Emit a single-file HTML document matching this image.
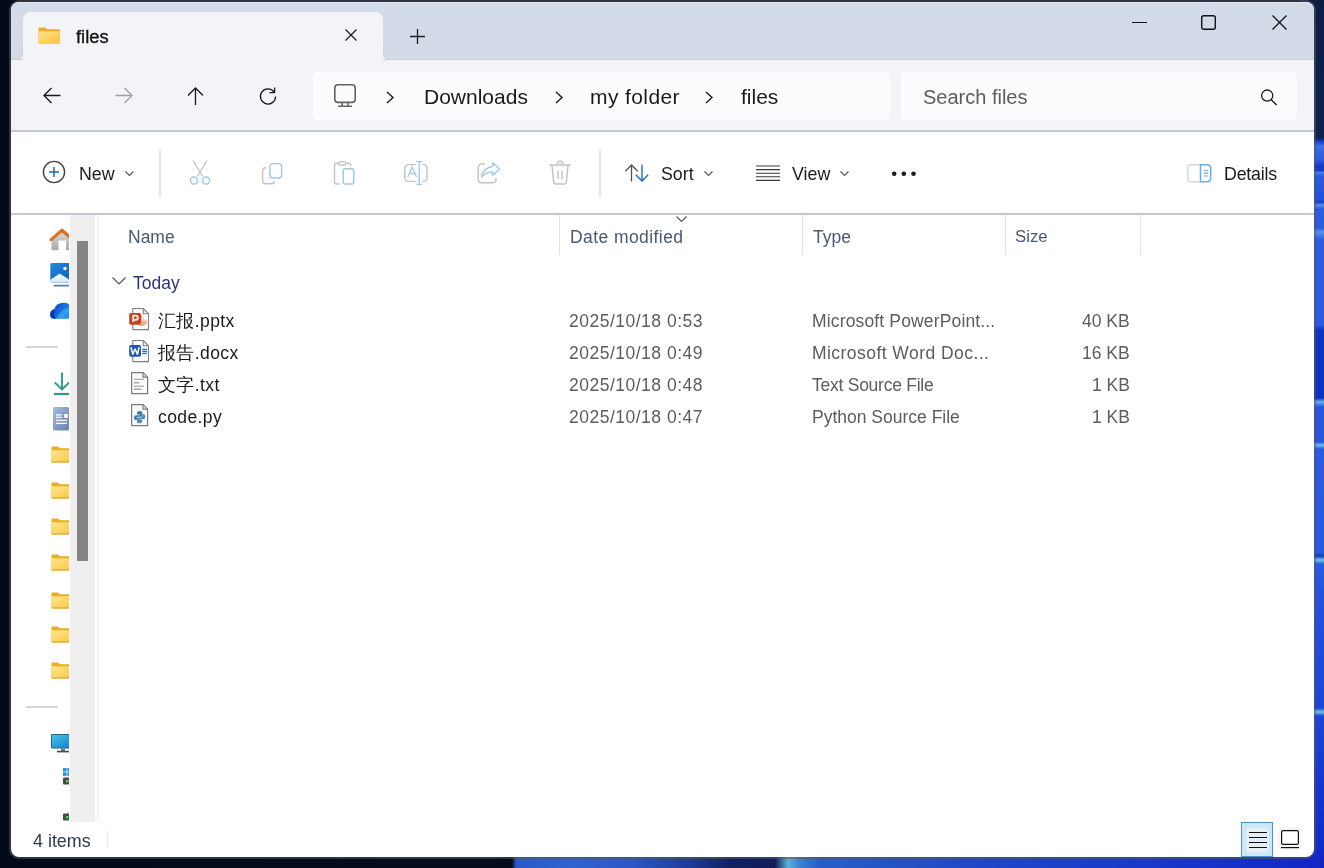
<!DOCTYPE html>
<html><head><meta charset="utf-8">
<style>
*{margin:0;padding:0;box-sizing:border-box}
html,body{width:1324px;height:868px;overflow:hidden;background:#040a17;font-family:"Liberation Sans",sans-serif;color:#1a1a1a}
.a{position:absolute}
.t{position:absolute;white-space:nowrap;line-height:1;will-change:transform}
svg{position:absolute;overflow:visible}
#bg{left:0;top:0;width:1324px;height:868px}
#win{left:9px;top:0px;width:1307px;height:859px;border-radius:10px;background:#fff;border:2px solid rgba(80,88,97,.56);box-shadow:inset 0 0 0 1px rgba(255,255,255,.55);background-clip:padding-box}
</style></head><body>
<div id="bg" class="a">
  <div class="a" style="left:1300px;top:0;width:24px;height:868px;background:linear-gradient(180deg,#0d1e46 0,#0f2150 138px,#1838c0 141px,#3a70e8 146px,#2a5ce0 160px,#1838c8 166px,#1838c8 171px,#4a80e8 172px,#2a5ce0 176px,#2252dc 200px,#1838c8 202px,#5a90e8 205px,#2a5ce0 209px,#2a5ce0 228px,#5a90ec 232px,#2a5ce0 240px,#2a5ce0 325px,#1030c0 330px,#1030c0 398px,#6ab0e8 402px,#2855dc 407px,#2855dc 442px,#70c0e8 445px,#2a5ae0 449px,#2a58e0 553px,#1535c0 556px,#70c8e8 560px,#2a5ae0 564px,#2550dc 600px,#1e44d4 708px,#70c0e8 712px,#1e44d4 716px,#1632cc 800px,#1029c6 868px)"></div>
  <div class="a" style="left:0;top:850px;width:1324px;height:18px;background:linear-gradient(90deg,#040a17 0,#060c1a 512px,#2a58c8 516px,#3162cf 570px,#2c58c6 630px,#1f3a98 690px,#112160 730px,#0f1d58 775px,#5cb0d8 788px,#3c80cc 800px,#2a5cc8 820px,#2452c4 900px,#1f44c8 1000px,#1a38ca 1150px,#1226c5 1324px)"></div>
</div>
<div id="win" class="a">
  <!-- inner coordinates: subtract 11,2 ... we use page coords via wrapper -->
</div>
<div class="a" style="left:0;top:0;width:1324px;height:868px">
  <!-- titlebar -->
  <div class="a" style="left:11px;top:2px;width:1303px;height:58px;background:#d4dbe8;border-radius:8px 8px 0 0;border-bottom:1px solid #c9d0dc;border-top:1px solid #e1e6f0"></div>
  <!-- nav bar -->
  <div class="a" style="left:11px;top:60px;width:1303px;height:70px;background:#f3f4f8"></div>
  <div class="a" style="left:11px;top:130px;width:1303px;height:2px;background:#c3c8d1"></div>
  <!-- tab -->
  <div class="a" style="left:23px;top:12px;width:360px;height:48px;background:#f3f4f8;border-radius:8px 8px 0 0"></div>
  <div class="a" style="left:11px;top:50px;width:12px;height:9px;background:#f3f4f8"></div>
  <div class="a" style="left:11px;top:46px;width:12px;height:14px;background:#d4dbe8;border-radius:0 0 7px 0;border-bottom:1px solid #c9d0dc;border-right:1px solid #c9d0dc"></div>
  <div class="a" style="left:383px;top:50px;width:12px;height:9px;background:#f3f4f8"></div>
  <div class="a" style="left:383px;top:46px;width:12px;height:14px;background:#d4dbe8;border-radius:0 0 0 7px;border-bottom:1px solid #c9d0dc;border-left:1px solid #c9d0dc"></div>
  <!-- tab folder icon -->
  <svg style="left:37.5px;top:27px" width="22.5" height="17" viewBox="0 0 22 18" preserveAspectRatio="none">
    <defs><linearGradient id="fg" x1="0" y1="0" x2="1" y2="1"><stop offset="0" stop-color="#ffe38a"/><stop offset="1" stop-color="#fcc43c"/></linearGradient></defs>
    <path d="M0.5 1.5 Q0.5 0.5 1.5 0.5 H7 L9 2.5 H20.5 Q21.5 2.5 21.5 3.5 V16.5 Q21.5 17.5 20.5 17.5 H1.5 Q0.5 17.5 0.5 16.5 Z" fill="#e8ad22"/>
    <path d="M0.5 4.5 H21.5 V16.5 Q21.5 17.5 20.5 17.5 H1.5 Q0.5 17.5 0.5 16.5 Z" fill="url(#fg)"/>
  </svg>
  <div class="t" style="left:76.3px;top:28.2px;font-size:18.4px;color:#111;-webkit-text-stroke:0.3px #111">files</div>
  <svg style="left:345px;top:29px" width="12" height="12"><path d="M0.5 0.5 L11.5 11.5 M11.5 0.5 L0.5 11.5" stroke="#1f1f1f" stroke-width="1.3"/></svg>
  <svg style="left:410px;top:29px" width="15" height="15"><path d="M7.5 0 V15 M0 7.5 H15" stroke="#1f1f1f" stroke-width="1.3"/></svg>
  <!-- caption buttons -->
  <div class="a" style="left:1132px;top:22px;width:15px;height:1px;background:#111"></div>
  <svg style="left:1201px;top:15px" width="15" height="15"><rect x="0.7" y="0.7" width="13.6" height="13.6" rx="2" fill="none" stroke="#111" stroke-width="1.4"/></svg>
  <svg style="left:1272px;top:15px" width="15" height="15"><path d="M0.5 0.5 L14.5 14.5 M14.5 0.5 L0.5 14.5" stroke="#111" stroke-width="1.3"/></svg>

  <!-- nav arrows -->
  <svg style="left:43px;top:87px" width="18" height="17" viewBox="0 0 18 17"><path d="M17.5 8.5 H1 M8.5 1 L1 8.5 L8.5 16" fill="none" stroke="#1a1a1a" stroke-width="1.3"/></svg>
  <svg style="left:115px;top:87px" width="18" height="17" viewBox="0 0 18 17"><path d="M0.5 8.5 H17 M9.5 1 L17 8.5 L9.5 16" fill="none" stroke="#a0a0a0" stroke-width="1.3"/></svg>
  <svg style="left:187px;top:87px" width="17" height="18" viewBox="0 0 17 18"><path d="M8.5 18 V1 M1 8.5 L8.5 1 L16 8.5" fill="none" stroke="#1a1a1a" stroke-width="1.3"/></svg>
  <svg style="left:259px;top:87px" width="18" height="18" viewBox="0 0 18 18"><path d="M15.2 5 A7.6 7.6 0 1 0 16.6 9.5" fill="none" stroke="#1a1a1a" stroke-width="1.3"/><path d="M15.6 0.5 V5.6 H10.5" fill="none" stroke="#1a1a1a" stroke-width="1.3"/></svg>

  <!-- address bar -->
  <div class="a" style="left:313px;top:72px;width:577px;height:48px;background:#fbfcfe;border-radius:6px"></div>
  <svg style="left:334px;top:83.8px" width="23" height="24" viewBox="0 0 23 24"><rect x="0.8" y="0.8" width="20.4" height="17.6" rx="3.2" fill="none" stroke="#626262" stroke-width="1.6"/><path d="M8.2 18.4 V21.6 M14 18.4 V21.6 M4 22.2 H18" fill="none" stroke="#626262" stroke-width="1.5"/></svg>
  <svg style="left:386px;top:90.5px" width="8" height="13"><path d="M1 1 L7 6.5 L1 12" fill="none" stroke="#1a1a1a" stroke-width="1.4"/></svg>
  <div class="t" style="left:424px;top:86px;font-size:21px">Downloads</div>
  <svg style="left:555px;top:91px" width="8" height="13"><path d="M1 1 L7 6.5 L1 12" fill="none" stroke="#1a1a1a" stroke-width="1.4"/></svg>
  <div class="t" style="left:590px;top:86px;font-size:21px;letter-spacing:0.4px">my folder</div>
  <svg style="left:705px;top:91px" width="8" height="13"><path d="M1 1 L7 6.5 L1 12" fill="none" stroke="#1a1a1a" stroke-width="1.4"/></svg>
  <div class="t" style="left:741px;top:86px;font-size:21px">files</div>
  <!-- search -->
  <div class="a" style="left:901px;top:72px;width:396px;height:48px;background:#fbfcfe;border-radius:6px"></div>
  <div class="t" style="left:923px;top:87px;font-size:20px;color:#5d5d5d">Search files</div>
  <svg style="left:1261px;top:88.5px" width="17" height="17" viewBox="0 0 17 17"><circle cx="6.2" cy="6.6" r="5.6" fill="none" stroke="#1a1a1a" stroke-width="1.3"/><path d="M10.3 10.7 L15.6 16" stroke="#1a1a1a" stroke-width="1.4"/></svg>

  <!-- command bar -->
  <div class="a" style="left:11px;top:132px;width:1303px;height:81px;background:#fff"></div>
  <div class="a" style="left:11px;top:213px;width:1303px;height:2px;background:#c3c8d1"></div>
  <!-- New -->
  <svg style="left:42.4px;top:160.4px" width="24" height="24" viewBox="0 0 24 24"><circle cx="12" cy="12" r="10.6" fill="none" stroke="#444" stroke-width="1.4"/><path d="M12 7 V17 M7 12 H17" stroke="#1d6bb8" stroke-width="1.5"/></svg>
  <div class="t" style="left:79px;top:165.7px;font-size:17.8px">New</div>
  <svg style="left:125px;top:171px" width="9" height="5"><path d="M0.5 0.5 L4.5 4.5 L8.5 0.5" fill="none" stroke="#555" stroke-width="1.1"/></svg>
  <div class="a" style="left:159px;top:149px;width:2px;height:48px;background:#e6e6e6"></div>
  <!-- cut -->
  <svg style="left:189px;top:160px" width="22" height="25" viewBox="0 0 22 25"><path d="M4 0.5 L13.5 16.5 M18 0.5 L8.5 16.5" fill="none" stroke="#c2c2c2" stroke-width="1.3"/><circle cx="5" cy="20.5" r="3.6" fill="none" stroke="#9cc7ea" stroke-width="1.4"/><circle cx="17" cy="20.5" r="3.6" fill="none" stroke="#9cc7ea" stroke-width="1.4"/></svg>
  <!-- copy -->
  <svg style="left:261px;top:162px" width="23" height="23" viewBox="0 0 23 23"><path d="M5.2 5.8 Q1.6 5.8 1.6 9.4 V18.2 Q1.6 21.8 5.2 21.8 H10.2 Q13.4 21.8 13.4 19.3" fill="none" stroke="#c2c2c2" stroke-width="1.4"/><rect x="8.9" y="1.6" width="11.7" height="14.4" rx="3" fill="none" stroke="#9cc7ea" stroke-width="1.4"/></svg>
  <!-- paste -->
  <svg style="left:333px;top:161px" width="22" height="24" viewBox="0 0 22 24"><path d="M5.3 2.3 H3.5 Q1.5 2.3 1.5 4.3 V21 Q1.5 23 3.5 23 H6.5" fill="none" stroke="#c2c2c2" stroke-width="1.4"/><path d="M13.5 2.3 H15.5 Q17.5 2.3 17.5 4.3 V5.3" fill="none" stroke="#c2c2c2" stroke-width="1.4"/><rect x="5.6" y="0.6" width="7.4" height="3.4" rx="1.7" fill="none" stroke="#c2c2c2" stroke-width="1.3"/><rect x="10.2" y="7.7" width="10.6" height="15.3" rx="2.2" fill="none" stroke="#9cc7ea" stroke-width="1.4"/></svg>
  <!-- rename -->
  <svg style="left:404px;top:161px" width="24" height="24" viewBox="0 0 24 24"><path d="M11.5 3.6 H5 Q0.8 3.6 0.8 7.8 V16.2 Q0.8 20.4 5 20.4 H11.5" fill="none" stroke="#c2c2c2" stroke-width="1.4"/><path d="M18.5 3.6 H19 Q23 3.6 23 7.8 V16.2 Q23 20.4 19 20.4 H18.5" fill="none" stroke="#c2c2c2" stroke-width="1.4"/><path d="M15.2 0.6 V23.4 M12.3 0.6 H18.2 M12.3 23.4 H18.2" fill="none" stroke="#9cc7ea" stroke-width="1.3"/><path d="M3.8 16 L8.2 6 L12.6 16 M5.4 12.6 H11" fill="none" stroke="#9cc7ea" stroke-width="1.2"/></svg>
  <!-- share -->
  <svg style="left:477px;top:162px" width="24" height="22" viewBox="0 0 24 22"><path d="M8 2 H5 Q1.2 2 1.2 5.8 V17 Q1.2 20.8 5 20.8 H15.2 Q19 20.8 19 17 V15.5" fill="none" stroke="#c2c2c2" stroke-width="1.4"/><path d="M15.8 0.8 L22.5 7 L15.8 13.2 V9.8 Q9 9.8 4.5 15 Q6 5.8 15.8 4.3 Z" fill="none" stroke="#9cc7ea" stroke-width="1.3" stroke-linejoin="round"/></svg>
  <!-- delete -->
  <svg style="left:549px;top:160px" width="22" height="25" viewBox="0 0 22 25"><path d="M0.5 5 H21.5 M3 5 L4.6 22 Q4.8 24 7 24 H15 Q17.2 24 17.4 22 L19 5 M9 10.5 V19 M13 10.5 V19" fill="none" stroke="#c2c2c2" stroke-width="1.4"/><path d="M8 5 Q8 1.2 11 1.2 Q14 1.2 14 5" fill="none" stroke="#c2c2c2" stroke-width="1.4"/></svg>
  <div class="a" style="left:599px;top:149px;width:2px;height:48px;background:#e6e6e6"></div>
  <!-- sort -->
  <svg style="left:625px;top:164px" width="25" height="18" viewBox="0 0 25 18"><path d="M6.5 17.5 V1 M0.3 7.2 L6.5 1 L12.7 7.2" fill="none" stroke="#505050" stroke-width="1.3"/><path d="M17 0.5 V17 M10.8 10.8 L17 17 L23.2 10.8" fill="none" stroke="#1b72c8" stroke-width="1.4"/></svg>
  <div class="t" style="left:661px;top:165.7px;font-size:17.8px">Sort</div>
  <svg style="left:704px;top:171px" width="9" height="5"><path d="M0.5 0.5 L4.5 4.5 L8.5 0.5" fill="none" stroke="#555" stroke-width="1.1"/></svg>
  <!-- view -->
  <svg style="left:756px;top:165px" width="24" height="16" viewBox="0 0 24 16"><path d="M0 1 H24 M0 4.6 H24 M0 8.2 H24 M0 11.8 H24 M0 15.4 H24" stroke="#3a3a3a" stroke-width="1.1"/></svg>
  <div class="t" style="left:792px;top:165.7px;font-size:17.8px">View</div>
  <svg style="left:840px;top:171px" width="9" height="5"><path d="M0.5 0.5 L4.5 4.5 L8.5 0.5" fill="none" stroke="#555" stroke-width="1.1"/></svg>
  <!-- more -->
  <svg style="left:891px;top:171px" width="26" height="6"><circle cx="3.2" cy="2.7" r="2.3" fill="#1a1a1a"/><circle cx="12.8" cy="2.7" r="2.3" fill="#1a1a1a"/><circle cx="22.5" cy="2.7" r="2.3" fill="#1a1a1a"/></svg>
  <!-- details -->
  <svg style="left:1187px;top:164px" width="25" height="19" viewBox="0 0 25 19"><path d="M14 0.8 H4 Q0.8 0.8 0.8 4 V14.5 Q0.8 17.7 4 17.7 H14" fill="none" stroke="#d6d6d6" stroke-width="1.4"/><path d="M13.5 0.8 H20 Q23.7 0.8 23.7 4.5 V14 Q23.7 17.7 20 17.7 H13.5 Z" fill="none" stroke="#5db0ec" stroke-width="1.5"/><path d="M17 6.5 H21 M17 9.2 H21 M17 12 H21" stroke="#5db0ec" stroke-width="1.2"/></svg>
  <div class="t" style="left:1224px;top:165.7px;font-size:17.8px;letter-spacing:-0.2px">Details</div>

  <!-- nav pane -->
  <div class="a" style="left:11px;top:215px;width:58px;height:607px;overflow:hidden">
    <!-- home -->
    <svg style="left:38.5px;top:13px" width="24" height="24" viewBox="0 0 24 24"><defs><linearGradient id="hm" x1="0" y1="0" x2="0" y2="1"><stop offset="0" stop-color="#dcdcdc"/><stop offset="1" stop-color="#a8a8a8"/></linearGradient></defs><path d="M1.5 10.5 L12 3 L22.5 10.5 V22.3 H16 V12.5 H8.5 V22.3 H1.5 Z" fill="url(#hm)"/><path d="M1.2 11.6 L12 2.2 L22.8 11.6" fill="none" stroke="#de6f1d" stroke-width="3.2" stroke-linejoin="round" stroke-linecap="round"/></svg>
    <!-- gallery -->
    <svg style="left:38.5px;top:48px" width="24" height="24" viewBox="0 0 24 24"><defs><linearGradient id="gl" x1="0" y1="0" x2="1" y2="1"><stop offset="0" stop-color="#1d8ade"/><stop offset="1" stop-color="#0c5cb6"/></linearGradient><linearGradient id="gm" x1="0" y1="0" x2="0" y2="1"><stop offset="0" stop-color="#ffffff"/><stop offset="1" stop-color="#cfe3f5"/></linearGradient></defs><rect x="0.3" y="0" width="23.5" height="19.5" rx="1.5" fill="url(#gl)"/><path d="M0.3 17 L9.5 11 L23.8 19.5 H0.3 Z" fill="url(#gm)"/><path d="M0.3 17.5 L9.5 11 L18 16" fill="none" stroke="#e9f3fc" stroke-width="0.8"/><circle cx="15" cy="5.5" r="1.7" fill="#fff"/><rect x="3.5" y="21.8" width="20" height="1.8" rx="0.9" fill="#5a7ea8"/></svg>
    <!-- onedrive -->
    <svg style="left:38.5px;top:86.5px" width="26" height="18" viewBox="0 0 26 18"><defs><linearGradient id="od" x1="0" y1="0.3" x2="1" y2="0.7"><stop offset="0" stop-color="#0b3fb8"/><stop offset="0.45" stop-color="#1b6fe0"/><stop offset="1" stop-color="#2fb0f2"/></linearGradient></defs><path d="M4.5 16.8 Q0 16.8 0 12.2 Q0 8 4 7.2 Q6.5 0.8 13.5 0.8 Q20 0.8 22.5 6.2 Q26 7.2 26 12 Q26 16.8 21 16.8 Z" fill="url(#od)"/><path d="M0.5 14.5 Q1 8.5 5.5 7.5 Q3 11 5.5 16.8 H4.5 Q1.5 16.8 0.5 14.5 Z" fill="#0a35a6"/><path d="M6 16.8 Q10 9 16 6.5 Q20 5.2 24 7.8 Q17 8.5 12.5 16.8 Z" fill="#3ab8f5" opacity="0.55"/></svg>
    <div class="a" style="left:15px;top:131px;width:32px;height:2px;background:#d6d6d6"></div>
    <!-- downloads -->
    <svg style="left:43px;top:157px" width="20" height="24" viewBox="0 0 20 24"><path d="M8 0.5 V17.5 M0.8 10.5 L8 17.5 L15.2 10.5" fill="none" stroke="#2a9c8a" stroke-width="1.9"/><path d="M0 22 H17" stroke="#2a9c8a" stroke-width="2.2"/></svg>
    <!-- documents -->
    <svg style="left:42px;top:192px" width="17" height="24" viewBox="0 0 17 24"><defs><linearGradient id="dc" x1="0" y1="0" x2="1" y2="1"><stop offset="0" stop-color="#a9bcda"/><stop offset="1" stop-color="#6683ac"/></linearGradient></defs><rect x="0" y="0" width="16" height="23.5" rx="1.5" fill="url(#dc)"/><path d="M3 7.8 H8.7 M3 10.4 H8.7 M3 13.4 H14 M3 16.4 H14" stroke="#fff" stroke-width="1.3"/><rect x="11.2" y="7" width="3.6" height="3.8" fill="#fff"/></svg>
    <!-- folders -->
    <svg style="left:40px;top:231px" width="22" height="17" viewBox="0 0 22 18" preserveAspectRatio="none"><use href="#fold"/></svg>
    <svg style="left:40px;top:267px" width="22" height="17" viewBox="0 0 22 18" preserveAspectRatio="none"><use href="#fold"/></svg>
    <svg style="left:40px;top:303px" width="22" height="17" viewBox="0 0 22 18" preserveAspectRatio="none"><use href="#fold"/></svg>
    <svg style="left:40px;top:339px" width="22" height="17" viewBox="0 0 22 18" preserveAspectRatio="none"><use href="#fold"/></svg>
    <svg style="left:40px;top:376.5px" width="22" height="17" viewBox="0 0 22 18" preserveAspectRatio="none"><use href="#fold"/></svg>
    <svg style="left:40px;top:411px" width="22" height="17" viewBox="0 0 22 18" preserveAspectRatio="none"><use href="#fold"/></svg>
    <svg style="left:40px;top:447px" width="22" height="17" viewBox="0 0 22 18" preserveAspectRatio="none"><use href="#fold"/></svg>
    <div class="a" style="left:15px;top:491px;width:32px;height:2px;background:#d6d6d6"></div>
    <!-- this pc -->
    <svg style="left:40px;top:519px" width="24" height="19" viewBox="0 0 24 19"><defs><linearGradient id="pc" x1="0" y1="0" x2="1" y2="1"><stop offset="0" stop-color="#3ec7ee"/><stop offset="1" stop-color="#1577c9"/></linearGradient></defs><rect x="0" y="0" width="24" height="14.5" rx="1" fill="#2b4f6e"/><rect x="0.8" y="0.8" width="22.4" height="12.9" fill="url(#pc)"/><rect x="10" y="14.5" width="4" height="2.5" fill="#6a7a88"/><rect x="6" y="16.8" width="12" height="1.6" fill="#3c4a58"/></svg>
    <!-- drive 1 -->
    <svg style="left:52px;top:553px" width="10" height="18" viewBox="0 0 10 18"><rect x="0" y="0" width="3.6" height="3.6" fill="#2e8ee0"/><rect x="4.3" y="0" width="3.6" height="3.6" fill="#2e8ee0"/><rect x="0" y="4.3" width="3.6" height="3.6" fill="#2e8ee0"/><rect x="4.3" y="4.3" width="3.6" height="3.6" fill="#2e8ee0"/><rect x="0" y="9.5" width="10" height="7" rx="1" fill="#4a4a4a"/><rect x="3" y="12" width="2.4" height="2.4" fill="#38e04c"/></svg>
    <!-- drive 2 -->
    <svg style="left:52px;top:595px" width="10" height="16" viewBox="0 0 10 16"><path d="M4 2.5 L8 0 V3 H4 Z" fill="#d8d8d8"/><rect x="0" y="3.5" width="10" height="7" rx="1" fill="#4a4a4a"/><rect x="3" y="6" width="2.4" height="2.4" fill="#38e04c"/></svg>
  </div>
  <svg width="0" height="0" style="position:absolute"><defs><linearGradient id="fg2" x1="0" y1="0" x2="1" y2="1"><stop offset="0" stop-color="#ffe694"/><stop offset="1" stop-color="#fcc53c"/></linearGradient>
    <g id="fold"><path d="M0.5 1.5 Q0.5 0.5 1.5 0.5 H7 L9 2.5 H20.5 Q21.5 2.5 21.5 3.5 V16.5 Q21.5 17.5 20.5 17.5 H1.5 Q0.5 17.5 0.5 16.5 Z" fill="#e8ad22"/><path d="M0.5 4.5 H21.5 V16.5 Q21.5 17.5 20.5 17.5 H1.5 Q0.5 17.5 0.5 16.5 Z" fill="url(#fg2)"/><path d="M0.5 16.8 H21.5" stroke="#d9a537" stroke-width="1"/></g></defs></svg>
  <!-- nav scrollbar -->
  <div class="a" style="left:70px;top:215px;width:25px;height:607px;background:#efefef"></div>
  <div class="a" style="left:77px;top:241px;width:11px;height:320px;background:#858585"></div>
  <div class="a" style="left:97px;top:215px;width:2px;height:607px;background:#f4f4f4"></div>

  <!-- column header -->
  <div class="t" style="left:128px;top:228.5px;font-size:17.5px;color:#4a5873">Name</div>
  <div class="a" style="left:559px;top:215px;width:1px;height:40px;background:#e3e3e3"></div>
  <svg style="left:676px;top:216px" width="11" height="6"><path d="M0.5 0.5 L5.5 5.5 L10.5 0.5" fill="none" stroke="#555" stroke-width="1.1"/></svg>
  <div class="t" style="left:570px;top:228.5px;font-size:17.5px;color:#4a5873;letter-spacing:0.42px">Date modified</div>
  <div class="a" style="left:802px;top:215px;width:1px;height:40px;background:#e3e3e3"></div>
  <div class="t" style="left:813px;top:228.5px;font-size:17.5px;color:#4a5873">Type</div>
  <div class="a" style="left:1005px;top:215px;width:1px;height:40px;background:#e3e3e3"></div>
  <div class="t" style="left:1015px;top:228.5px;font-size:16.8px;color:#4a5873">Size</div>
  <div class="a" style="left:1140px;top:215px;width:1px;height:40px;background:#e3e3e3"></div>
  <!-- group -->
  <svg style="left:112px;top:277px" width="14" height="8"><path d="M0.5 0.5 L7 7 L13.5 0.5" fill="none" stroke="#555" stroke-width="1.2"/></svg>
  <div class="t" style="left:133px;top:274.5px;font-size:17.5px;color:#29337a">Today</div>

  <!-- rows -->
  <div class="t" style="left:158px;top:312.5px;font-size:17.5px;letter-spacing:0.4px">汇报.pptx</div>
  <div class="t" style="left:569px;top:312.5px;font-size:17.5px;color:#5c5c5c;letter-spacing:0.5px">2025/10/18 0:53</div>
  <div class="t" style="left:812px;top:312.5px;font-size:17.5px;color:#5c5c5c;letter-spacing:0.15px">Microsoft PowerPoint...</div>
  <div class="t" style="right:194.5px;top:312.5px;font-size:17.5px;color:#5c5c5c">40 KB</div>
  <div class="t" style="left:158px;top:344.5px;font-size:17.5px;letter-spacing:0.4px">报告.docx</div>
  <div class="t" style="left:569px;top:344.5px;font-size:17.5px;color:#5c5c5c;letter-spacing:0.5px">2025/10/18 0:49</div>
  <div class="t" style="left:812px;top:344.5px;font-size:17.5px;color:#5c5c5c;letter-spacing:0.45px">Microsoft Word Doc...</div>
  <div class="t" style="right:194.5px;top:344.5px;font-size:17.5px;color:#5c5c5c">16 KB</div>
  <div class="t" style="left:158px;top:376.5px;font-size:17.5px;letter-spacing:0.4px">文字.txt</div>
  <div class="t" style="left:569px;top:376.5px;font-size:17.5px;color:#5c5c5c;letter-spacing:0.5px">2025/10/18 0:48</div>
  <div class="t" style="left:812px;top:376.5px;font-size:17.5px;color:#5c5c5c;letter-spacing:-0.25px">Text Source File</div>
  <div class="t" style="right:194.5px;top:376.5px;font-size:17.5px;color:#5c5c5c">1 KB</div>
  <div class="t" style="left:158px;top:408.5px;font-size:17.5px;letter-spacing:0.4px">code.py</div>
  <div class="t" style="left:569px;top:408.5px;font-size:17.5px;color:#5c5c5c;letter-spacing:0.5px">2025/10/18 0:47</div>
  <div class="t" style="left:812px;top:408.5px;font-size:17.5px;color:#5c5c5c">Python Source File</div>
  <div class="t" style="right:194.5px;top:408.5px;font-size:17.5px;color:#5c5c5c">1 KB</div>

  <!-- file icons -->
  <svg style="left:128px;top:307px" width="22" height="24" viewBox="0 0 22 24"><path d="M4.8 1.5 H15.2 L20.5 6.8 V22.6 H4.8 Z" fill="#fff" stroke="#7e7e7e" stroke-width="1.1" stroke-linejoin="round"/><path d="M15.2 1.5 V6.8 H20.5" fill="none" stroke="#7e7e7e" stroke-width="1.1"/><path d="M14 8.5 A5.2 5.2 0 1 0 19.2 13.7 H14 Z" fill="#f19a7d" opacity="0.85"/><path d="M15 9 V13 H18.5" fill="none" stroke="#fbd2c2" stroke-width="1.3"/><rect x="1.2" y="6" width="11.8" height="11.7" rx="1.6" fill="#c8431f"/><path d="M5.2 15 V8.6 H7.6 Q9.8 8.6 9.8 10.7 Q9.8 12.8 7.6 12.8 H5.2" fill="none" stroke="#fff" stroke-width="1.7"/></svg>
  <svg style="left:128px;top:339px" width="22" height="24" viewBox="0 0 22 24"><path d="M4.8 1.5 H15.2 L20.5 6.8 V22.6 H4.8 Z" fill="#fff" stroke="#7e7e7e" stroke-width="1.1" stroke-linejoin="round"/><path d="M15.2 1.5 V6.8 H20.5" fill="none" stroke="#7e7e7e" stroke-width="1.1"/><path d="M14.3 10.3 H19 M14.3 12.3 H19 M14.3 14.4 H19" stroke="#2e62b0" stroke-width="1.2"/><rect x="1.2" y="6" width="11.8" height="11.7" rx="1.6" fill="#1f57b8"/><path d="M3 8.3 L4.8 15.3 L7.1 10 L9.4 15.3 L11.2 8.3" fill="none" stroke="#fff" stroke-width="1.5" stroke-linejoin="round"/></svg>
  <svg style="left:131px;top:372px" width="18" height="23" viewBox="0 0 18 23"><path d="M0.6 0.6 H12 L16.6 5.2 V21.6 H0.6 Z" fill="#fbfbfb" stroke="#7a7a7a" stroke-width="1.2" stroke-linejoin="round"/><path d="M12 0.6 V5.2 H16.6" fill="none" stroke="#7a7a7a" stroke-width="1.2"/><path d="M3 7.4 H13 M3 10.7 H8.5 M3 14.1 H13 M3 17.3 H10.5" stroke="#aaaaaa" stroke-width="1.4"/></svg>
  <svg style="left:131px;top:404px" width="18" height="23" viewBox="0 0 18 23"><path d="M0.6 0.6 H12 L16.6 5.2 V21.6 H0.6 Z" fill="#fbfbfb" stroke="#7a7a7a" stroke-width="1.2" stroke-linejoin="round"/><path d="M12 0.6 V5.2 H16.6" fill="none" stroke="#7a7a7a" stroke-width="1.2"/><path d="M8.5 7 Q6 7 6 9 V10.6 H8.8 V11.2 H4.6 Q3 11.2 3 13.7 Q3 16 4.5 16 H5.8 V14.2 Q5.8 12.8 7.3 12.8 H10 Q11.4 12.8 11.4 11.4 V9 Q11.4 7 8.5 7 Z" fill="#3b7ca6"/><path d="M8.7 19.2 Q11.3 19.2 11.3 17.2 V15.6 H8.4 V15 H12.6 Q14.3 15 14.3 12.5 Q14.3 10.2 12.8 10.2 H11.5 V12 Q11.5 13.4 10 13.4 H7.3 Q5.9 13.4 5.9 14.8 V17.2 Q5.9 19.2 8.7 19.2 Z" fill="#4a8cb4"/></svg>

  <!-- status bar -->
  <div class="t" style="left:33px;top:832.6px;font-size:17.9px;color:#2b3a55">4 items</div>
  <div class="a" style="left:107px;top:831px;width:1px;height:17px;background:#e8e8e8"></div>
  <div class="a" style="left:1241px;top:822px;width:32px;height:35px;background:#cde7f6;border:1px solid #4b93cf"></div>
  <div class="a" style="left:1246px;top:828px;width:23px;height:24px;background:#e3eef6;border-radius:4px"></div>
  <svg style="left:1249px;top:831px" width="19" height="18"><path d="M0 1.5 H18 M0 6.5 H18 M0 11.5 H18 M0 16.5 H18" stroke="#111" stroke-width="1.15"/></svg>
  <div class="a" style="left:1278px;top:827px;width:23px;height:23px;background:#f6f6f6;border-radius:4px"></div>
  <svg style="left:1281px;top:830px" width="19" height="19"><rect x="0.6" y="0.6" width="16.8" height="13.8" rx="1.5" fill="#fff" stroke="#111" stroke-width="1.2"/><path d="M0 17.6 H18" stroke="#111" stroke-width="1.15"/></svg>
</div>
</body></html>
